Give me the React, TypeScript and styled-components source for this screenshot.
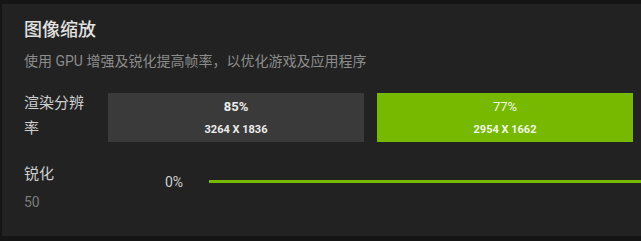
import React from 'react'
import styled, { createGlobalStyle } from 'styled-components'

const GlobalStyle = createGlobalStyle`
  html, body {
    margin: 0;
    padding: 0;
    background: #151515;
    font-family: Roboto, "Noto Sans CJK SC", sans-serif;
  }
`

const Page = styled.div`
  width: 641px;
  height: 241px;
  padding: 4px 0 5px 2px;
  box-sizing: border-box;
  overflow: hidden;
`

const Panel = styled.section`
  height: 100%;
  background: #222222;
  padding: 14px 0 0 22px;
  box-sizing: border-box;
`

const Title = styled.h2`
  margin: 0;
  font-size: 18px;
  font-weight: 500;
  color: #e2e2e2;
  line-height: 24px;
`

const Subtitle = styled.p`
  margin: 10px 0 0;
  font-size: 14px;
  color: #8c8c8c;
  line-height: 18px;
`

const SettingRow = styled.div<{ $gap: number }>`
  display: grid;
  grid-template-columns: 84px 1fr;
  align-items: start;
  margin-top: ${(p) => p.$gap}px;
`

const Label = styled.div`
  width: 62px;
  font-size: 15px;
  color: #cfcfcf;
  line-height: 25px;
`

const SubValue = styled.div`
  font-size: 14px;
  color: #7a7a7a;
  line-height: 20px;
  margin-top: 5px;
`

const Options = styled.div`
  display: grid;
  grid-template-columns: 256px 256px;
  gap: 13px;
  margin-top: 2px;
`

const Option = styled.button<{ $active?: boolean }>`
  height: 49px;
  border: none;
  padding: 0;
  background: ${(p) => (p.$active ? '#76b900' : '#3a3a3a')};
  color: ${(p) => (p.$active ? '#f2f7e6' : '#ececec')};
  display: flex;
  flex-direction: column;
  align-items: center;
  justify-content: center;
  gap: 9px;
  font-family: Roboto, sans-serif;
`

const Percent = styled.span<{ $active?: boolean }>`
  font-size: 13px;
  font-weight: ${(p) => (p.$active ? 400 : 700)};
  line-height: 15px;
`

const Resolution = styled.span`
  font-size: 11px;
  font-weight: 700;
  line-height: 13px;
`

const SliderWrap = styled.div`
  display: flex;
  align-items: center;
  margin: 7px -8px 0 0;
  height: 25px;
`

const SliderValue = styled.span`
  width: 101px;
  padding-left: 57px;
  box-sizing: border-box;
  font-size: 14px;
  color: #cfcfcf;
`

const Track = styled.div`
  flex: 1;
  height: 3px;
  background: #76b900;
`

export default function App() {
  return (
    <>
      <GlobalStyle />
      <Page>
        <Panel>
          <Title>图像缩放</Title>
          <Subtitle>使用 GPU 增强及锐化提高帧率，以优化游戏及应用程序</Subtitle>
          <SettingRow $gap={21}>
            <Label>渲染分辨率</Label>
            <Options>
              <Option>
                <Percent>85%</Percent>
                <Resolution>3264 X 1836</Resolution>
              </Option>
              <Option $active>
                <Percent $active>77%</Percent>
                <Resolution>2954 X 1662</Resolution>
              </Option>
            </Options>
          </SettingRow>
          <SettingRow $gap={20}>
            <div>
              <Label>锐化</Label>
              <SubValue>50</SubValue>
            </div>
            <SliderWrap>
              <SliderValue>0%</SliderValue>
              <Track />
            </SliderWrap>
          </SettingRow>
        </Panel>
      </Page>
    </>
  )
}
